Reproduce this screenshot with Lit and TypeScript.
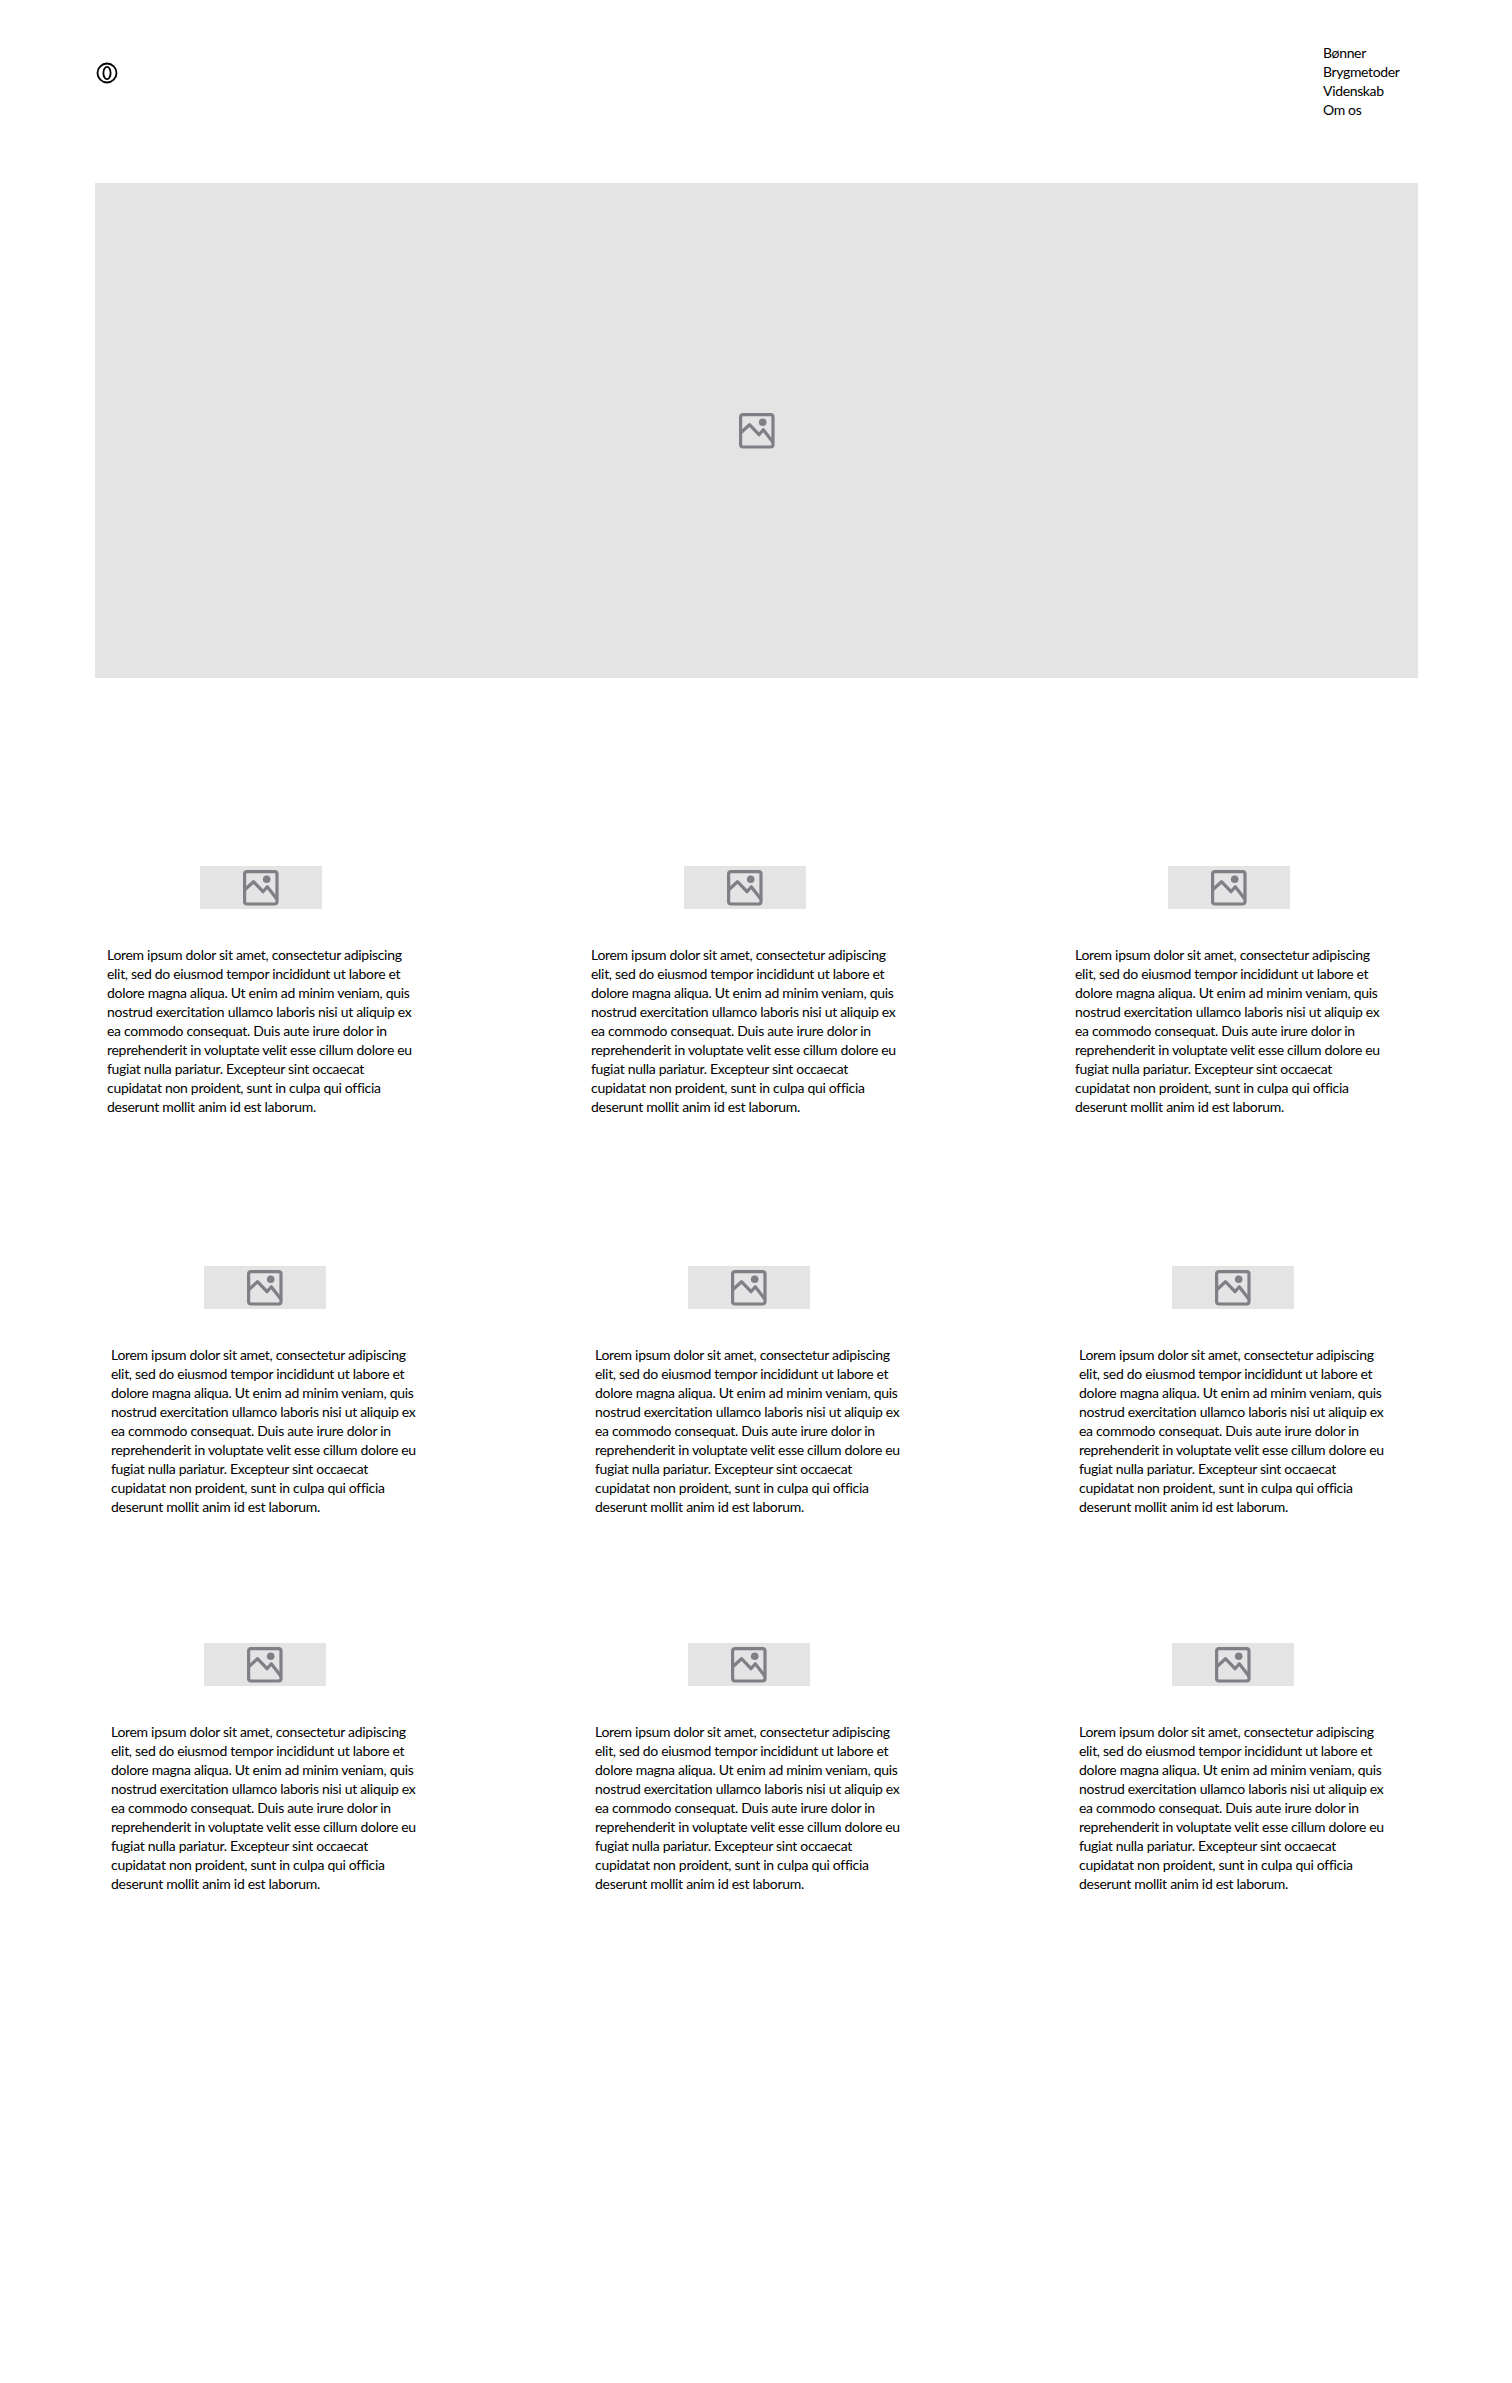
import { LitElement, html, css, svg } from "lit";
import { customElement } from "lit/decorators.js";

const LOREM = [
  "Lorem ipsum dolor sit amet, consectetur adipiscing",
  "elit, sed do eiusmod tempor incididunt ut labore et",
  "dolore magna aliqua. Ut enim ad minim veniam, quis",
  "nostrud exercitation ullamco laboris nisi ut aliquip ex",
  "ea commodo consequat. Duis aute irure dolor in",
  "reprehenderit in voluptate velit esse cillum dolore eu",
  "fugiat nulla pariatur. Excepteur sint occaecat",
  "cupidatat non proident, sunt in culpa qui officia",
  "deserunt mollit anim id est laborum.",
];

const NAV = ["Bønner", "Brygmetoder", "Videnskab", "Om os"];

const pictureIcon = svg`
  <svg class="icon" viewBox="0 0 36 36" fill="none" stroke="#7f7f86" stroke-width="3.2" stroke-linejoin="round">
    <rect x="1.6" y="1.6" width="32.4" height="32.4" rx="2.5" />
    <path d="M1.5 20 L10.5 11.7 L20 21.7 L24.3 16.7 L34 29.3" />
    <circle cx="23.7" cy="9.3" r="3.8" fill="#7f7f86" stroke="none" />
  </svg>
`;

@customElement("app-root")
export class AppRoot extends LitElement {
  static styles = css`
    :host {
      display: block;
      min-height: 2383px;
      background: #fff;
      color: #000;
      font-family: Lato, "Liberation Sans", sans-serif;
    }

    .page {
      padding: 0 94px 0 95px;
    }

    .header {
      display: flex;
      justify-content: space-between;
      align-items: center;
      height: 183px;
      padding-right: 19px;
    }

    .logo {
      display: block;
      width: 22px;
      height: 22px;
      margin: -37px 0 0 1px;
    }

    .nav {
      display: flex;
      flex-direction: column;
      width: 76px;
      margin-top: -22px;
      font-size: 14px;
      line-height: 19px;
      letter-spacing: -0.35px;
      white-space: nowrap;
    }

    .hero {
      display: flex;
      align-items: center;
      justify-content: center;
      height: 495px;
      background: #e4e4e5;
    }

    .hero .icon {
      width: 36px;
      height: 36px;
    }

    .row {
      display: grid;
      grid-template-columns: repeat(3, 484px);
    }

    .row-first {
      margin-top: 188px;
      padding-left: 12px;
    }

    .row-second {
      margin-top: 150px;
      padding-left: 16px;
    }

    .row-third {
      margin-top: 127px;
      padding-left: 16px;
    }

    .thumb {
      display: flex;
      align-items: center;
      justify-content: center;
      width: 122px;
      height: 43px;
      margin-left: 93px;
      background: #e4e4e5;
    }

    .thumb .icon {
      width: 36px;
      height: 36px;
    }

    .text {
      margin: 36px 0 0;
      font-size: 14px;
      line-height: 19px;
      letter-spacing: -0.3px;
      white-space: nowrap;
    }
  `;

  private renderCard() {
    return html`
      <div class="card">
        <div class="thumb">${pictureIcon}</div>
        <p class="text">${LOREM.map((l) => html`${l}<br />`)}</p>
      </div>
    `;
  }

  private renderRow(name: string) {
    return html`<div class="row ${name}">
      ${this.renderCard()}${this.renderCard()}${this.renderCard()}
    </div>`;
  }

  render() {
    return html`
      <div class="page">
        <header class="header">
          <svg class="logo" viewBox="0 0 22 22" fill="none" stroke="#000" stroke-width="1.8">
            <circle cx="11" cy="11" r="9.5" />
            <ellipse cx="11" cy="11" rx="3.6" ry="6.2" />
          </svg>
          <nav class="nav">${NAV.map((n) => html`<span>${n}</span>`)}</nav>
        </header>
        <div class="hero">${pictureIcon}</div>
        ${this.renderRow("row-first")}${this.renderRow("row-second")}${this.renderRow("row-third")}
      </div>
    `;
  }
}
